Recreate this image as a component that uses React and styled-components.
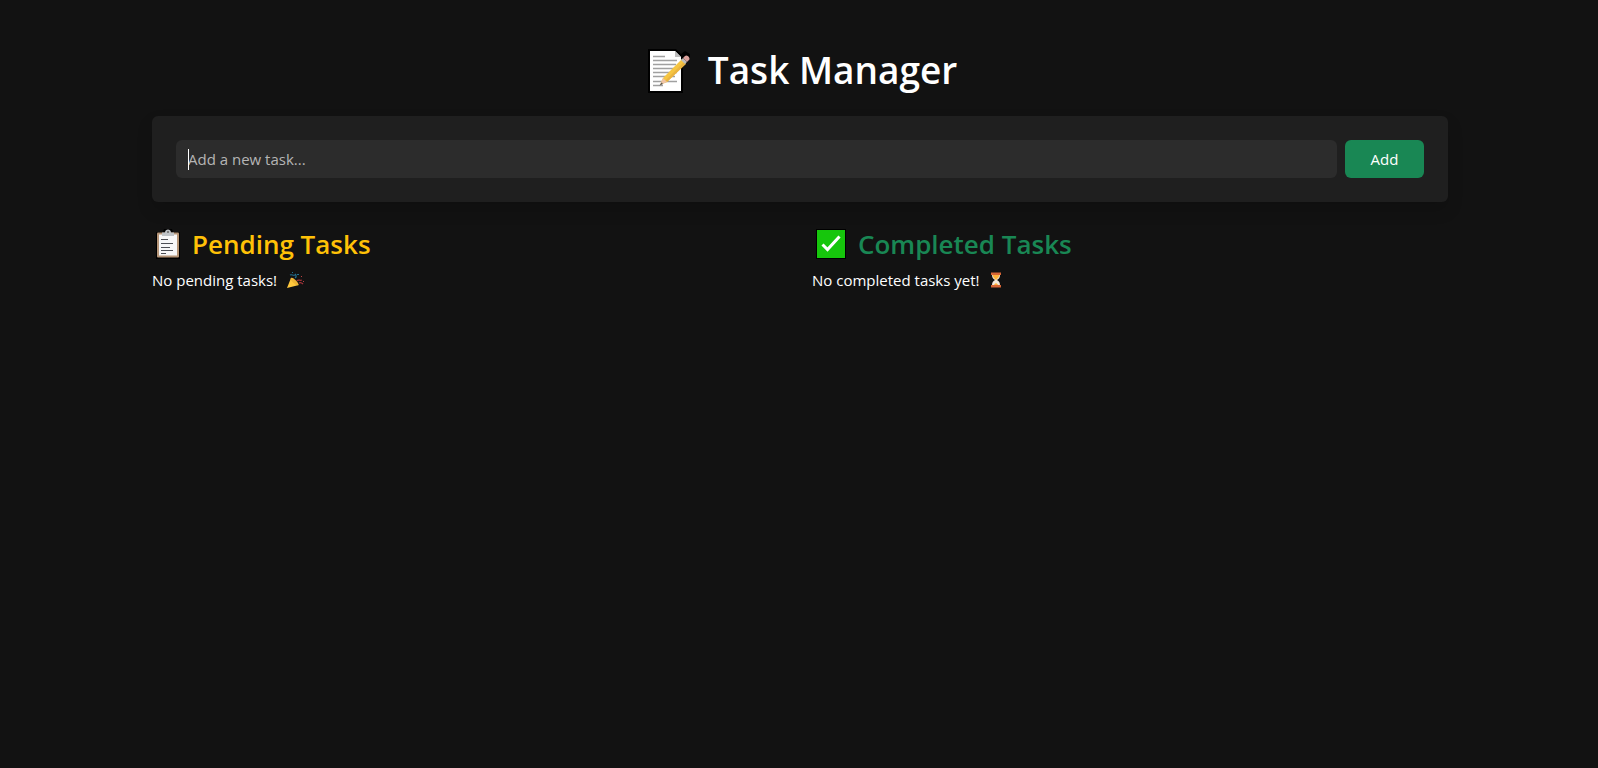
import React, { useState } from "react";
import styled, { createGlobalStyle } from "styled-components";

const GlobalStyle = createGlobalStyle`
  *, *::before, *::after { box-sizing: border-box; }
  body {
    margin: 0;
    background: #121212;
    color: #fff;
    font: 400 16px/24px "Segoe UI", "Open Sans", "Noto Sans", sans-serif;
  }
`;

const Page = styled.main`
  min-height: 100vh;
  padding: 46px 12px 48px 14px;
`;

const Container = styled.div`
  max-width: 1296px;
  margin: 0 auto;
`;

const Title = styled.h1`
  display: flex;
  justify-content: center;
  align-items: center;
  gap: 17px;
  margin: 0 0 22px;
  font-size: 37px;
  line-height: 48px;
  font-weight: 600;
`;

const Card = styled.form`
  display: flex;
  gap: 8px;
  margin: 0 0 25px;
  padding: 24px;
  border-radius: 6px;
  background: #1f1f1f;
  box-shadow: 0 8px 16px rgba(0, 0, 0, 0.15);
`;

const Field = styled.div`
  position: relative;
  flex: 1;
  display: flex;
`;

const TextInput = styled.input`
  flex: 1;
  min-width: 0;
  height: 38px;
  padding: 0 12px;
  border: 0;
  border-radius: 6px;
  outline: 0;
  background: #2c2c2c;
  color: #fff;
  caret-color: transparent;
  font: inherit;
  font-size: 15px;

  &::placeholder { color: #b5b5b5; opacity: 1; }
  &:not(:placeholder-shown) { caret-color: #fff; }
  &:not(:placeholder-shown) + span { display: none; }
`;

const Caret = styled.span`
  position: absolute;
  left: 12px;
  top: 9px;
  width: 1px;
  height: 21px;
  background: #fff;
  pointer-events: none;
`;

const AddButton = styled.button`
  min-width: 79px;
  height: 38px;
  padding: 0 24px;
  border: 0;
  border-radius: 6px;
  background: #198754;
  color: #fff;
  font: inherit;
  font-size: 15px;
  cursor: pointer;
`;

const Columns = styled.div`
  display: grid;
  grid-template-columns: 1fr 1fr;
  gap: 24px;
`;

const SectionTitle = styled.h2`
  display: flex;
  align-items: center;
  gap: 9px;
  margin: 0 0 7px;
  color: ${(p) => p.$color};
  font-size: 26px;
  line-height: 34px;
  font-weight: 600;
`;

const Message = styled.p`
  display: flex;
  align-items: center;
  gap: 8px;
  margin: 0;
  font-size: 15px;
  line-height: 24px;
`;

const Icon = styled.svg`
  display: block;
  flex: none;
`;

const MemoIcon = () => (
  <Icon width="48" height="48" viewBox="0 0 48 48" aria-hidden="true">
    <path d="M5 3h28l5 5 4-3 5 3v5l-7 8v26H5z" fill="#000" />
    <path d="M7 5h25l6 6v34H7z" fill="#fff" />
    <path d="M32 5v6h6z" fill="#bdbdbd" />
    <path d="M10 10.500h12M10 14.500h24M10 18.500h23M10 22.500h24M10 26.500h24M10 30.500h22M10 35.500h24M10 39.500h10" stroke="#a0a0a0" strokeWidth="1.300" />
    <path d="M17 39l3-7 19-19 4 4-19 19z" fill="#f5c542" />
    <path d="M22 35l19-19 2 2-19 18z" fill="#eab440" />
    <path d="M17 39l3-7 4 4z" fill="#efc4a5" />
    <path d="M16.500 39.500l2-3 1.500 1.500z" fill="#555" />
    <path d="M38 14l2-2 4 4-2 2z" fill="#bbb" />
    <path d="M40 12l2-2c2-2 6 2 4 4l-2 2z" fill="#d9a09b" />
  </Icon>
);

const ClipboardIcon = () => (
  <Icon width="31" height="32" viewBox="0 0 31 32" aria-hidden="true">
    <path d="M4 4h7l1-3h8l1 3h7v27H4z" fill="#000" />
    <rect x="5" y="4.500" width="22" height="25" rx="1" fill="#b59578" />
    <path d="M7 6.500h18v21H7z" fill="#f7f7f8" />
    <path d="M10 8V4.500h3c0-4 6-4 6 0h3V8z" fill="#bfc3c7" />
    <circle cx="16" cy="4" r="1" fill="#666" />
    <path d="M9 11.500h7M9 15.500h12M9 19.500h9M9 22.500h12M9 25.500h5" stroke="#4d4f55" strokeWidth="1.200" />
  </Icon>
);

const CheckIcon = () => (
  <Icon width="37" height="32" viewBox="0 0 37 32" aria-hidden="true">
    <path d="M4 1h30v30H4z" fill="#000" />
    <path d="M5 2h28v28H5z" fill="#16c60c" />
    <path d="M10.500 16.500l5 5L27.500 8.500" fill="none" stroke="#fff" strokeWidth="3" />
  </Icon>
);

const PartyIcon = () => (
  <Icon width="20" height="20" viewBox="0 0 20 20" aria-hidden="true">
    <path d="M2 18L6 8l8 7z" fill="#ffc83d" />
    <path d="M6 8c1-1 3 .5 5 2.500s3 4 2 4.500c-1 .5-3-.5-5-2.500S5 9 6 8z" fill="#f0b535" />
    <path d="M5 5c2-1 3 1 5 0M10 8c2-1 1-3 0-4" fill="none" stroke="#226f8f" strokeWidth="1.200" />
    <path d="M12 11c1-2 3 0 5-1M14 13c2-1 3 0 4 1" fill="none" stroke="#a33239" strokeWidth="1.300" />
    <path d="M12 4h2v1h-2zM7 2h1v1H7z" fill="#226f8f" />
    <path d="M16 6h1v1h-1zM18 11h1v1h-1z" fill="#b94040" />
  </Icon>
);

const HourglassIcon = () => (
  <Icon width="16" height="20" viewBox="0 0 16 20" aria-hidden="true">
    <path d="M4 4h8c0 4-1 4.500-3 6 2 1.500 3 2 3 6H4c0-4 1-4.500 3-6-2-1.500-3-2-3-6z" fill="#f3e9dc" />
    <path d="M4.500 5h7l-1 2.500L8 10 5.500 7.500zM4.500 16l3.500-3 3.500 3z" fill="#ffb33b" />
    <path d="M3 2.500h10V5H3zM3 15h10v2.500H3z" fill="#d66535" />
  </Icon>
);

export default function App() {
  const [task, setTask] = useState("");
  return (
    <>
      <GlobalStyle />
      <Page>
        <Container>
          <Title><MemoIcon />Task Manager</Title>
          <Card onSubmit={(e) => e.preventDefault()}>
            <Field>
              <TextInput
                type="text"
                aria-label="Add a new task"
                placeholder="Add a new task..."
                value={task}
                onChange={(e) => setTask(e.target.value)}
              />
              <Caret aria-hidden="true" />
            </Field>
            <AddButton type="submit">Add</AddButton>
          </Card>
          <Columns>
            <section>
              <SectionTitle $color="#ffc107"><ClipboardIcon />Pending Tasks</SectionTitle>
              <Message>No pending tasks! <PartyIcon /></Message>
            </section>
            <section>
              <SectionTitle $color="#198754"><CheckIcon />Completed Tasks</SectionTitle>
              <Message>No completed tasks yet! <HourglassIcon /></Message>
            </section>
          </Columns>
        </Container>
      </Page>
    </>
  );
}
